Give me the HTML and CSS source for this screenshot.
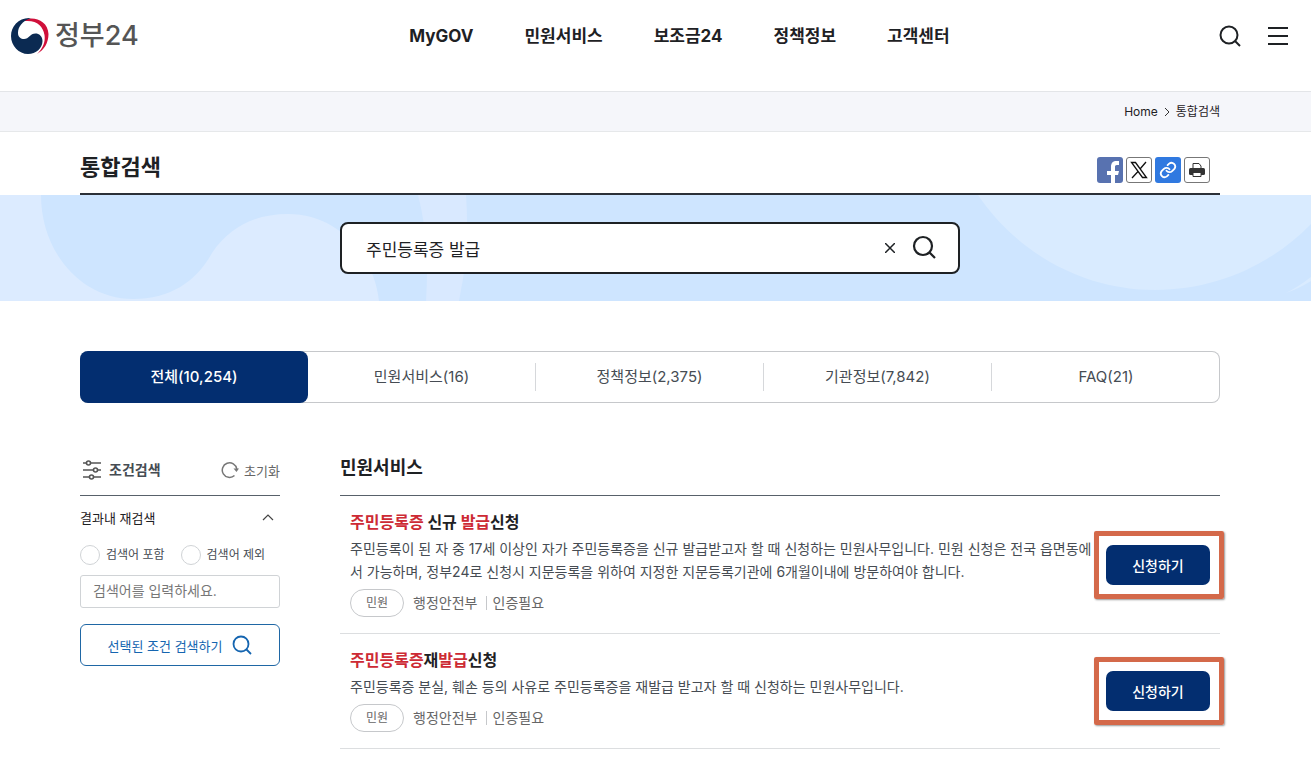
FILE: index.html
```
<!DOCTYPE html>
<html lang="ko">
<head>
  <meta charset="UTF-8">
  <meta name="viewport" content="width=device-width, initial-scale=1">
  <title>통합검색 - 정부24</title>
  <link rel="stylesheet" href="styles.css">
</head>
<body>

  <header class="header">
    <a class="logo" href="#">
      <svg width="38" height="38" viewBox="0 0 38 38" aria-hidden="true">
        <path fill="#d0103a" d="M14 2.500C24-1 37 4 37.500 17C37.500 26 33 33 26 37C32 31 34.500 25 33.500 18C32 9 26 3 14 4Z"/>
        <path fill="#0b2a52" d="M20 1C8 0 0 9 0 19C0 29 8 37 17 37C25 37 31.500 31 31.500 24C31.500 19 28 16.500 24.500 16.500C19 16.500 18 22 13 22C10 22 7 20 7 16C7 10 11 4 20 1Z"/>
      </svg>
      <span>정부24</span>
    </a>
    <nav class="gnb">
      <a href="#">MyGOV</a>
      <a href="#">민원서비스</a>
      <a href="#">보조금24</a>
      <a href="#">정책정보</a>
      <a href="#">고객센터</a>
    </nav>
    <div class="header-tools">
      <button type="button" aria-label="검색">
        <svg width="24" height="24" viewBox="0 0 24 24" fill="none" stroke="#1e2124" stroke-width="2"><circle cx="11" cy="11" r="8.500"/><path d="M17 17l5 5"/></svg>
      </button>
      <button type="button" aria-label="전체메뉴">
        <svg width="20" height="20" viewBox="0 0 20 20" stroke="#1e2124" stroke-width="2"><path d="M0 2h20M0 10h20M0 18h20"/></svg>
      </button>
    </div>
  </header>

  <div class="breadcrumb">
    <div class="inner">
      <a href="#">Home</a>
      <svg width="6" height="10" viewBox="0 0 6 10" fill="none" stroke="#333" aria-hidden="true"><path d="M1 1l4 4-4 4"/></svg>
      <span>통합검색</span>
    </div>
  </div>

  <div class="inner">
    <div class="page-title">
      <h1>통합검색</h1>
      <div class="share">
        <button type="button" class="facebook" aria-label="페이스북">
          <svg width="26" height="26" viewBox="0 0 26 26"><path fill="#fff" d="M14 26v-8h-4v-4h4v-4c0-4 2-6 5-6h3v4h-2c-2 0-2 1-2 2v4h4l-1 4h-3v8z"/></svg>
        </button>
        <button type="button" class="boxed" aria-label="X">
          <svg width="18" height="18" viewBox="0 0 18 18" fill="none" stroke="#111" stroke-width="1.300"><path d="M1.500 1.500h4l11 15h-4zM16 1L10 8M8 10.500L2 17"/></svg>
        </button>
        <button type="button" class="link" aria-label="링크 복사">
          <svg width="18" height="18" viewBox="0 0 24 24" fill="none" stroke="#fff" stroke-width="2.400" stroke-linecap="round"><path d="M10 13a5 5 0 0 0 7.500.500l3-3a5 5 0 0 0-7-7l-2 2M14 11a5 5 0 0 0-7.500-.500l-3 3a5 5 0 0 0 7 7l2-2"/></svg>
        </button>
        <button type="button" class="boxed" aria-label="인쇄">
          <svg width="16" height="16" viewBox="0 0 16 16"><path fill="#fff" stroke="#333" d="M4 8V1.500h6L12 4v4"/><rect y="6" width="16" height="7" rx="1.500" fill="#333"/><path fill="#fff" stroke="#333" d="M4 10.500h8v4H4z"/></svg>
        </button>
      </div>
    </div>
  </div>

  <div class="search-banner">
    <svg class="banner-bg" viewBox="0 0 1311 106" preserveAspectRatio="none" aria-hidden="true">
      <path fill="#dcebff" d="M0 0H41C41 58 82 104 133 104C170 104 196 87 212 58C230 32 255 19 288 19C338 19 374 60 379 106H0Z"/>
      <path fill="#d9e9ff" d="M418 0H466Q470 55 459 106H426Q430 45 418 0Z"/>
      <path fill="#d9ebff" d="M978 0C1018 59 1084 95 1155 95C1215 95 1270 71 1311 29V0ZM1286 98Q1298 92 1311 82V86Q1298 94 1286 98Z"/>
    </svg>
    <div class="inner">
      <form class="search-box">
        <input type="text" value="주민등록증 발급" aria-label="검색어">
        <button type="reset" aria-label="지우기">
          <svg width="10" height="10" viewBox="0 0 10 10" stroke="#1e2124" stroke-width="1.500"><path d="M0 0l10 10M10 0L0 10"/></svg>
        </button>
        <button type="submit" aria-label="검색">
          <svg width="26" height="26" viewBox="0 0 26 26" fill="none" stroke="#1e2124" stroke-width="2.200"><circle cx="11" cy="11" r="9"/><path d="M17 17l6 6"/></svg>
        </button>
      </form>
    </div>
  </div>

  <main class="inner">
    <nav class="tabs">
      <a class="active" href="#">전체(10,254)</a>
      <a href="#">민원서비스(16)</a>
      <a href="#">정책정보(2,375)</a>
      <a href="#">기관정보(7,842)</a>
      <a href="#">FAQ(21)</a>
    </nav>

    <div class="columns">
      <aside>
        <form>
          <div class="filter-head">
            <h2>
              <svg width="20" height="20" viewBox="0 0 20 20" fill="#fff" stroke="#555" stroke-width="1.600"><path d="M1 3h18M1 10h18M1 17h18"/><circle cx="6.500" cy="3" r="2"/><circle cx="13.500" cy="10" r="2"/><circle cx="9.500" cy="17" r="2"/></svg>
              조건검색
            </h2>
            <button type="reset">
              <svg width="18" height="18" viewBox="0 0 18 18" fill="none" stroke="#777" stroke-width="1.500"><path d="M13.500 14.500A7.300 7.300 0 1 1 15.800 8"/><path fill="#777" stroke="none" d="M12.500 7.500H18L15.500 11z"/></svg>
              초기화
            </button>
          </div>
          <button type="button" class="filter-toggle">
            결과내 재검색
            <svg width="12" height="8" viewBox="0 0 12 8" fill="none" stroke="#444" stroke-width="1.200"><path d="M1 7l5-5 5 5"/></svg>
          </button>
          <div class="radios">
            <label><input type="radio" name="mode">검색어 포함</label>
            <label><input type="radio" name="mode">검색어 제외</label>
          </div>
          <input class="keyword" type="text" placeholder="검색어를 입력하세요." aria-label="재검색어">
          <button type="submit" class="filter-submit">
            선택된 조건 검색하기
            <svg width="20" height="20" viewBox="0 0 20 20" fill="none" stroke="#1565b0" stroke-width="1.800"><circle cx="9" cy="9" r="7.500"/><path d="M14 14l5 5"/></svg>
          </button>
        </form>
      </aside>

      <section class="results">
        <h2>민원서비스</h2>
        <ul>
          <li>
            <div class="result-text">
              <h3><a href="#"><em>주민등록증</em> 신규 <em>발급</em>신청</a></h3>
              <p>주민등록이 된 자 중 17세 이상인 자가 주민등록증을 신규 발급받고자 할 때 신청하는 민원사무입니다. 민원 신청은 전국 읍면동에서 가능하며, 정부24로 신청시 지문등록을 위하여 지정한 지문등록기관에 6개월이내에 방문하여야 합니다.</p>
              <div class="meta"><span class="chip">민원</span><span>행정안전부</span><span>인증필요</span></div>
            </div>
            <div class="apply"><button type="button">신청하기</button></div>
          </li>
          <li>
            <div class="result-text">
              <h3><a href="#"><em>주민등록증</em>재<em>발급</em>신청</a></h3>
              <p>주민등록증 분실, 훼손 등의 사유로 주민등록증을 재발급 받고자 할 때 신청하는 민원사무입니다.</p>
              <div class="meta"><span class="chip">민원</span><span>행정안전부</span><span>인증필요</span></div>
            </div>
            <div class="apply"><button type="button">신청하기</button></div>
          </li>
        </ul>
      </section>
    </div>
  </main>

</body>
</html>
```
FILE: styles.css
```
* {
  box-sizing: border-box;
}

body {
  margin: 0;
  font-family: Inter, "Noto Sans CJK KR", sans-serif;
  font-size: 14px;
  line-height: 24px;
  color: #1e2124;
  background: #fff;
}

h1, h2, h3, p, ul {
  margin: 0;
  padding: 0;
}

a {
  color: inherit;
  text-decoration: none;
}

button, input {
  font-family: inherit;
  color: inherit;
}

button {
  padding: 0;
  border: 0;
  background: none;
  cursor: pointer;
}

svg {
  display: block;
  flex: none;
}

.inner {
  padding: 0 91px 0 80px;
}

/* header */
.header {
  display: grid;
  grid-template-columns: 1fr auto 1fr;
  align-items: center;
  height: 92px;
  padding: 0 23px 20px 11px;
  border-bottom: 1px solid #e3e5e8;
}

.logo {
  display: flex;
  align-items: center;
  gap: 6px;
  font-size: 27px;
  font-weight: 500;
  color: #555;
}

.gnb {
  display: flex;
  gap: 51px;
  margin-left: 60px;
  font-size: 17px;
  font-weight: 700;
}

.header-tools {
  display: flex;
  justify-content: flex-end;
  align-items: center;
  gap: 26px;
}

.breadcrumb {
  background: #f5f6fa;
  border-bottom: 1px solid #e6e8ea;
  font-size: 12px;
}

.breadcrumb .inner {
  display: flex;
  justify-content: flex-end;
  align-items: center;
  gap: 6px;
  height: 39px;
}

/* title */
.page-title {
  display: flex;
  justify-content: space-between;
  align-items: center;
  height: 63px;
  border-bottom: 2px solid #2b3038;
}

.page-title h1 {
  font-size: 22px;
  line-height: 32px;
  padding-top: 8px;
}

.share {
  display: flex;
  gap: 3px;
  padding: 24px 10px 10px 0;
}

.share button {
  display: flex;
  align-items: center;
  justify-content: center;
  width: 26px;
  height: 26px;
  border-radius: 3px;
}

.facebook {
  background: #5872b0;
}

.link {
  background: #3079e0;
}

.boxed {
  border: 1px solid #777;
}

/* search */
.search-banner {
  position: relative;
  padding: 27px 0;
  background: #cee5ff;
}

.banner-bg {
  position: absolute;
  inset: 0;
  width: 100%;
  height: 100%;
}

.search-box {
  position: relative;
  display: flex;
  align-items: center;
  gap: 17px;
  max-width: 620px;
  height: 52px;
  margin: 0 auto;
  padding: 0 20px 0 24px;
  background: #fff;
  border: 2px solid #1e2124;
  border-radius: 8px;
}

.search-box input {
  flex: 1;
  min-width: 0;
  padding: 0;
  border: 0;
  outline: 0;
  font-size: 17px;
}

/* tabs */
.tabs {
  display: grid;
  grid-template-columns: repeat(5, 1fr);
  margin-top: 50px;
  border-radius: 8px;
  box-shadow: inset 0 0 0 1px #c6c8cb;
  font-size: 15px;
  color: #464c53;
}

.tabs a {
  display: flex;
  align-items: center;
  justify-content: center;
  height: 28px;
  margin: 12px 0;
  border-right: 1px solid #d6d8db;
}

.tabs a:last-child {
  border-right: 0;
}

.tabs .active {
  height: 52px;
  margin: 0;
  border-right: 0;
  border-radius: 8px;
  background: #032e70;
  color: #fff;
  font-weight: 500;
}

.columns {
  display: grid;
  grid-template-columns: 200px 1fr;
  gap: 60px;
  margin-top: 40px;
}

/* filter */
.filter-head {
  display: flex;
  justify-content: space-between;
  align-items: center;
  height: 53px;
  padding-top: 2px;
  border-bottom: 1px solid #58616a;
}

.filter-head h2 {
  display: flex;
  align-items: center;
  gap: 7px;
  padding-left: 2px;
  font-size: 14px;
  color: #464c53;
}

.filter-head button {
  display: flex;
  align-items: center;
  gap: 5px;
  font-size: 13px;
  color: #666;
}

.filter-toggle {
  display: flex;
  justify-content: space-between;
  align-items: center;
  width: 100%;
  height: 44px;
  padding: 0 6px 2px 0;
  font-size: 13px;
}

.radios {
  display: flex;
  gap: 16px;
  height: 30px;
  color: #464c53;
  font-size: 12px;
}

.radios label {
  display: flex;
  align-items: center;
  gap: 6px;
}

.radios input {
  appearance: none;
  width: 20px;
  height: 20px;
  margin: 0;
  border: 1px solid #d0d3d6;
  border-radius: 50%;
}

.radios input:checked {
  border: 6px solid #1565b0;
}

.keyword {
  width: 100%;
  height: 33px;
  margin-top: 5px;
  padding: 0 12px 2px;
  border: 1px solid #d0d3d6;
  border-radius: 3px;
  font-size: 14px;
}

.keyword::placeholder {
  color: #777;
}

.filter-submit {
  display: flex;
  align-items: center;
  justify-content: center;
  gap: 10px;
  width: 100%;
  height: 42px;
  margin-top: 16px;
  border: 1px solid #1f67a5;
  border-radius: 6px;
  font-size: 13px;
  color: #1565b0;
}

/* results */
.results h2 {
  height: 53px;
  padding-top: 13px;
  border-bottom: 1px solid #58616a;
  font-size: 18px;
}

.results ul {
  list-style: none;
}

.results li {
  display: flex;
  align-items: center;
  justify-content: space-between;
  gap: 12px;
  padding: 14px 10px 16px;
  border-bottom: 1px solid #dcdee0;
}

.result-text {
  min-width: 0;
}

.results h3 {
  font-size: 16px;
}

.results em {
  font-style: normal;
  color: #cd2a34;
}

.results p {
  margin-top: 3px;
  line-height: 23px;
  color: #464c53;
}

.meta {
  display: flex;
  align-items: center;
  margin-top: 6px;
  line-height: 14px;
  color: #666;
}

.meta .chip {
  padding: 6px 15px;
  margin-right: 9px;
  border: 1px solid #c6c8cb;
  border-radius: 14px;
  font-size: 12px;
}

.meta span:last-child {
  margin-left: 8px;
  padding-left: 6px;
  border-left: 1px solid #c6c8cb;
}

.apply {
  position: relative;
  flex: none;
  margin-top: 2px;
}

.apply::after {
  content: "";
  position: absolute;
  inset: -14px -14px -14px -12px;
  border: 5px solid #d4694a;
  border-radius: 2px;
  box-shadow: 1px 1px 2px #999;
  pointer-events: none;
}

.apply button {
  display: block;
  width: 104px;
  height: 40px;
  border-radius: 7px;
  background: #032e70;
  color: #fff;
  font-size: 14px;
  font-weight: 500;
}
```
